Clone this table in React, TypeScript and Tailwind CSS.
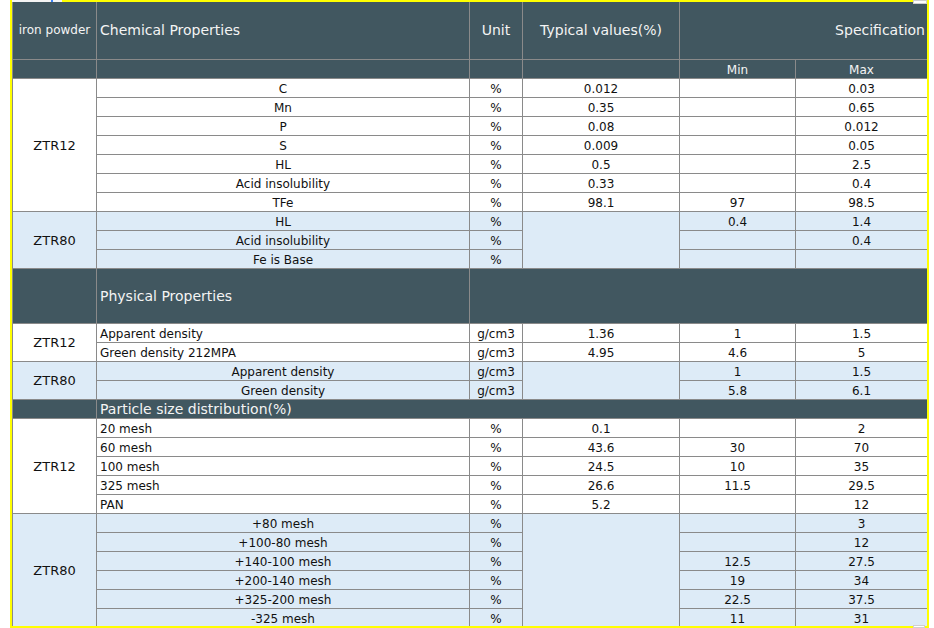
import React from "react";

type Row = [string, string, string, string, string];

const chemZtr12: Row[] = [
  ["C", "%", "0.012", "", "0.03"],
  ["Mn", "%", "0.35", "", "0.65"],
  ["P", "%", "0.08", "", "0.012"],
  ["S", "%", "0.009", "", "0.05"],
  ["HL", "%", "0.5", "", "2.5"],
  ["Acid insolubility", "%", "0.33", "", "0.4"],
  ["TFe", "%", "98.1", "97", "98.5"],
];

const chemZtr80: Row[] = [
  ["HL", "%", "", "0.4", "1.4"],
  ["Acid insolubility", "%", "", "", "0.4"],
  ["Fe is Base", "%", "", "", ""],
];

const physZtr12: Row[] = [
  ["Apparent density", "g/cm3", "1.36", "1", "1.5"],
  ["Green density 212MPA", "g/cm3", "4.95", "4.6", "5"],
];

const physZtr80: Row[] = [
  ["Apparent density", "g/cm3", "", "1", "1.5"],
  ["Green density", "g/cm3", "", "5.8", "6.1"],
];

const sizeZtr12: Row[] = [
  ["20 mesh", "%", "0.1", "", "2"],
  ["60 mesh", "%", "43.6", "30", "70"],
  ["100 mesh", "%", "24.5", "10", "35"],
  ["325 mesh", "%", "26.6", "11.5", "29.5"],
  ["PAN", "%", "5.2", "", "12"],
];

const sizeZtr80: Row[] = [
  ["+80 mesh", "%", "", "", "3"],
  ["+100-80 mesh", "%", "", "", "12"],
  ["+140-100 mesh", "%", "", "12.5", "27.5"],
  ["+200-140 mesh", "%", "", "19", "34"],
  ["+325-200 mesh", "%", "", "22.5", "37.5"],
  ["-325 mesh", "%", "", "11", "31"],
];

const dark = "bg-[#415760] text-[#f4f4f4]";

function Cell({
  children,
  className = "",
}: {
  children?: React.ReactNode;
  className?: string;
}) {
  return (
    <div
      className={`flex items-center justify-center whitespace-nowrap text-[12px] leading-none ${className}`}
    >
      {children}
    </div>
  );
}

// one product block: label cell spanning all rows, then name/unit/typ/min/max
function Block({
  label,
  rows,
  blue,
  leftNames,
  labelSpan,
  typicalSpan,
}: {
  label: string;
  rows: Row[];
  blue: boolean;
  leftNames: boolean;
  labelSpan: string;
  typicalSpan?: string;
}) {
  const bg = blue ? "bg-[#ddebf7]" : "bg-white";
  const td = `${bg} pt-[2px]`;
  return (
    <>
      <Cell className={`${bg} ${labelSpan} text-[13px]`}>{label}</Cell>
      {rows.map((r, i) => (
        <React.Fragment key={r[0] + i}>
          <Cell className={`${td} ${leftNames ? "justify-start pl-[3px]" : ""}`}>
            {r[0]}
          </Cell>
          <Cell className={td}>{r[1]}</Cell>
          {typicalSpan ? (
            i === 0 && <Cell className={`${bg} ${typicalSpan}`} />
          ) : (
            <Cell className={td}>{r[2]}</Cell>
          )}
          <Cell className={td}>{r[3]}</Cell>
          <Cell className={td}>{r[4]}</Cell>
        </React.Fragment>
      ))}
    </>
  );
}

export default function App() {
  return (
    <div
      className="relative h-[628px] w-[934px] overflow-hidden bg-white text-[#111]"
      style={{ fontFamily: '"DejaVu Sans", Verdana, sans-serif' }}
    >
      <div className="ml-[10px] h-[628px] w-[919px] overflow-hidden border-2 border-[#ffff00]">
        <div className="grid grid-cols-[83px_372px_52px_156px_115px_131px] grid-rows-[57px_repeat(11,18px)_54px_repeat(16,18px)] gap-px bg-[#8a8a8a] pl-px">
          {/* header */}
          <Cell className={`${dark} pb-[2px]`}>iron powder</Cell>
          <Cell className={`${dark} justify-start pb-[2px] pl-[3px] text-[14px]`}>
            Chemical Properties
          </Cell>
          <Cell className={`${dark} pb-[2px] text-[14px]`}>Unit</Cell>
          <Cell className={`${dark} pb-[2px] text-[14px]`}>Typical values(%)</Cell>
          <Cell className={`${dark} col-span-2 justify-end pb-[2px] pr-[2px] text-[14px]`}>
            Specification
          </Cell>
          <Cell className={dark} />
          <Cell className={dark} />
          <Cell className={dark} />
          <Cell className={dark} />
          <Cell className={`${dark} pt-[2px] text-[#e6e6e6]`}>Min</Cell>
          <Cell className={`${dark} pt-[2px] text-[#e6e6e6]`}>Max</Cell>

          <Block label="ZTR12" rows={chemZtr12} blue={false} leftNames={false} labelSpan="row-span-7" />
          <Block
            label="ZTR80"
            rows={chemZtr80}
            blue
            leftNames={false}
            labelSpan="row-span-3"
            typicalSpan="row-span-3"
          />

          <Cell className={dark} />
          <Cell className={`${dark} justify-start pl-[3px] text-[14px]`}>
            Physical Properties
          </Cell>
          <Cell className={`${dark} col-span-4`} />

          <Block label="ZTR12" rows={physZtr12} blue={false} leftNames labelSpan="row-span-2" />
          <Block
            label="ZTR80"
            rows={physZtr80}
            blue
            leftNames={false}
            labelSpan="row-span-2"
            typicalSpan="row-span-2"
          />

          <Cell className={dark} />
          <Cell className={`${dark} col-span-5 justify-start pl-[3px] text-[14px]`}>
            Particle size distribution(%)
          </Cell>

          <Block label="ZTR12" rows={sizeZtr12} blue={false} leftNames labelSpan="row-span-5" />
          <Block
            label="ZTR80"
            rows={sizeZtr80}
            blue
            leftNames={false}
            labelSpan="row-span-6"
            typicalSpan="row-span-6"
          />
        </div>
      </div>

      {/* bits of other windows peeking over the frame */}
      <div className="absolute left-[12px] top-0 h-[2px] w-[50px] bg-[#f4f4f4]">
        <div className="ml-[39px] h-[2px] w-[2px] bg-[#3b82f6]" />
      </div>
      <div className="absolute left-[913px] top-0 h-[4px] w-[14px] border border-[#cfcfcf] bg-white" />
      <div className="absolute left-[913px] top-[625px] h-[3px] w-[12px] border border-[#cfcfcf] bg-white" />
    </div>
  );
}
